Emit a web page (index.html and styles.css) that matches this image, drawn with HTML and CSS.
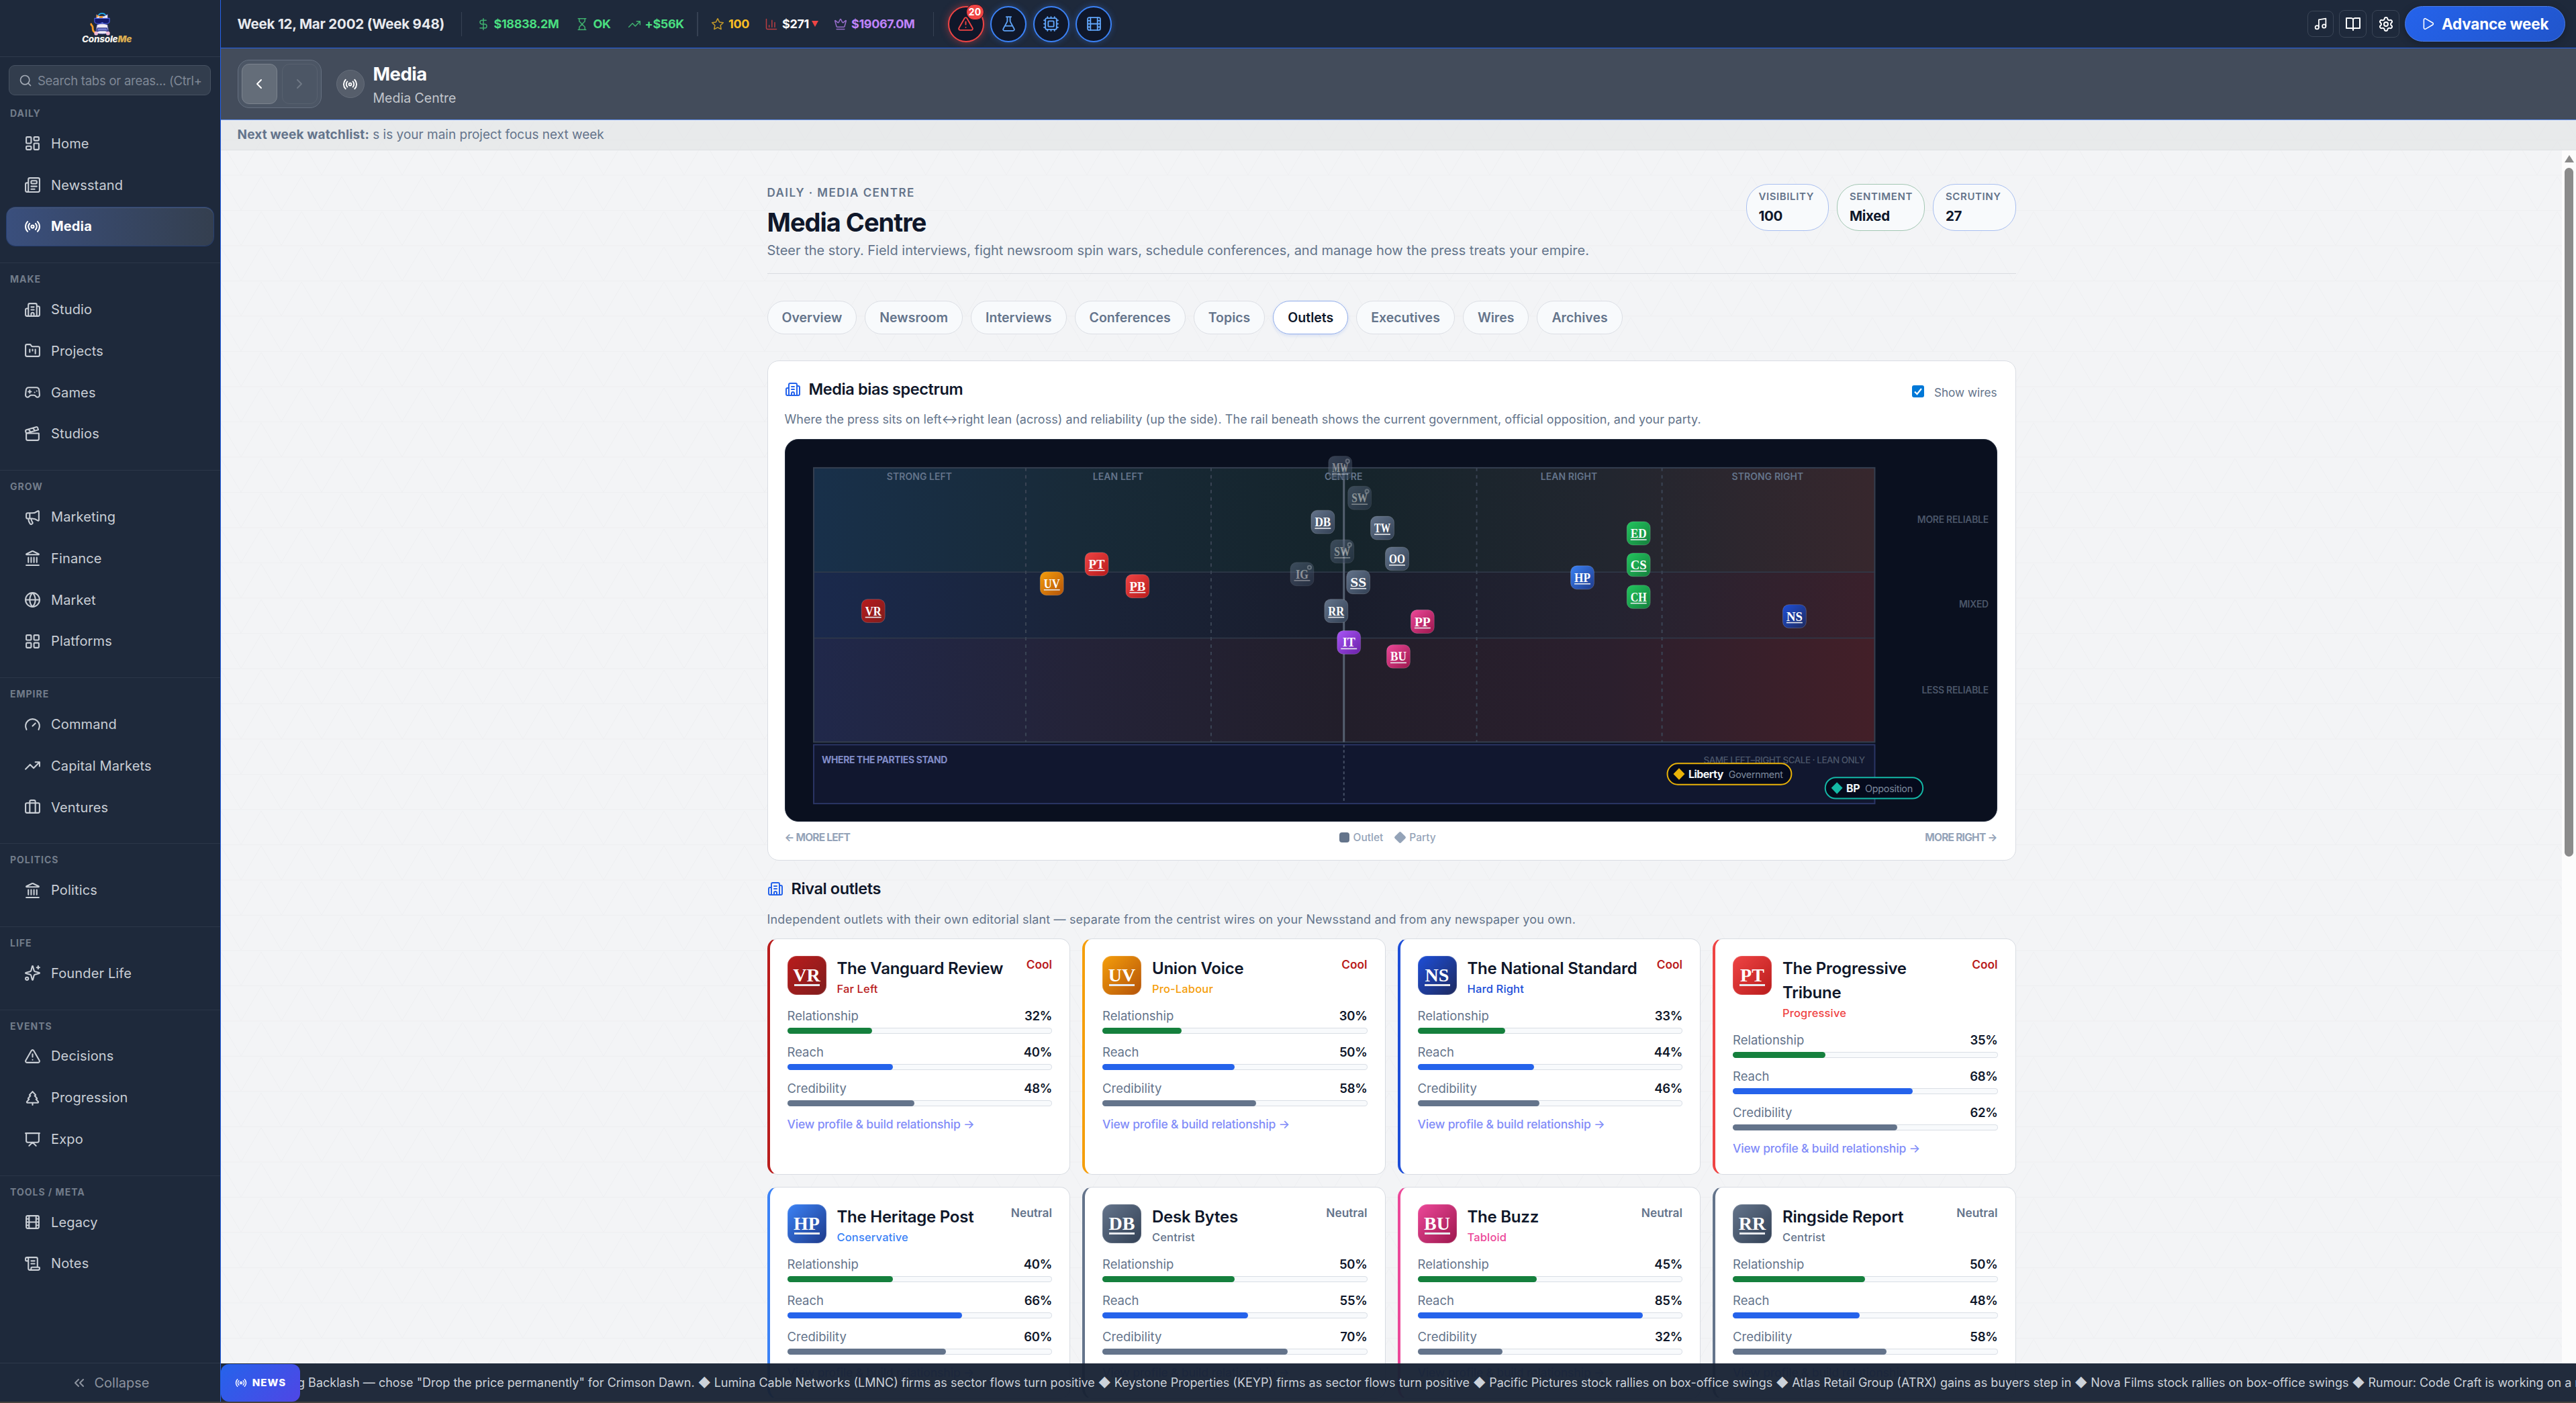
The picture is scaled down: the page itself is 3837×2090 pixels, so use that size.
FILE: index.html
```
<!DOCTYPE html>
<html lang="en">
<head>
    <meta charset="UTF-8">
    <meta name="viewport" content="width=device-width, initial-scale=1.0">
    <title>ConsoleMe - Media Centre</title>
    <link rel="stylesheet" href="styles.css">
</head>
<body>
    <!-- Icon sprite -->
    <svg class="sprite" aria-hidden="true">
        <symbol id="i-home" viewBox="0 0 24 24"><rect x="3" y="3" width="7" height="9" rx="1"/><rect x="14" y="3" width="7" height="5" rx="1"/><rect x="14" y="12" width="7" height="9" rx="1"/><rect x="3" y="16" width="7" height="5" rx="1"/></symbol>
        <symbol id="i-news" viewBox="0 0 24 24"><path d="M15 18h-5M18 14h-8M4 22h16a2 2 0 0 0 2-2V4a2 2 0 0 0-2-2H8a2 2 0 0 0-2 2v16a2 2 0 0 1-4 0v-9a2 2 0 0 1 2-2h2"/><rect x="10" y="6" width="8" height="4" rx="1"/></symbol>
        <symbol id="i-radio" viewBox="0 0 24 24"><path d="M16.247 7.761a6 6 0 0 1 0 8.478M19.075 4.933a10 10 0 0 1 0 14.134M4.925 19.067a10 10 0 0 1 0-14.134M7.753 16.239a6 6 0 0 1 0-8.478"/><circle cx="12" cy="12" r="2"/></symbol>
        <symbol id="i-building" viewBox="0 0 24 24"><path d="M10 12h4M10 8h4M14 21v-3a2 2 0 0 0-4 0v3M6 10H4a2 2 0 0 0-2 2v7a2 2 0 0 0 2 2h16a2 2 0 0 0 2-2V9a2 2 0 0 0-2-2h-2M6 21V5a2 2 0 0 1 2-2h8a2 2 0 0 1 2 2v16"/></symbol>
        <symbol id="i-kanban" viewBox="0 0 24 24"><path d="M4 20h16a2 2 0 0 0 2-2V8a2 2 0 0 0-2-2h-7.93a2 2 0 0 1-1.66-.9l-.82-1.2A2 2 0 0 0 7.93 3H4a2 2 0 0 0-2 2v13c0 1.1.9 2 2 2ZM8 10v4M12 10v2M16 10v6"/></symbol>
        <symbol id="i-gamepad" viewBox="0 0 24 24"><path d="M6 11h4M8 9v4M15 12h.01M18 10h.01M17.32 5H6.68a4 4 0 0 0-3.978 3.59c-.006.052-.01.101-.017.152C2.604 9.416 2 14.456 2 16a3 3 0 0 0 3 3c1 0 1.5-.5 2-1l1.414-1.414A2 2 0 0 1 9.828 16h4.344a2 2 0 0 1 1.414.586L17 18c.5.5 1 1 2 1a3 3 0 0 0 3-3c0-1.545-.604-6.584-.685-7.258-.007-.05-.011-.1-.017-.151A4 4 0 0 0 17.32 5z"/></symbol>
        <symbol id="i-clapper" viewBox="0 0 24 24"><path d="M20.2 6 3 11l-.9-2.4c-.3-1.1.3-2.2 1.3-2.5l13.5-4c1.1-.3 2.2.3 2.5 1.3ZM6.2 5.3l3.1 3.9M12.4 3.4l3.1 4M3 11h18v8a2 2 0 0 1-2 2H5a2 2 0 0 1-2-2Z"/></symbol>
        <symbol id="i-megaphone" viewBox="0 0 24 24"><path d="M11 6a13 13 0 0 0 8.4-2.8A1 1 0 0 1 21 4v12a1 1 0 0 1-1.6.8A13 13 0 0 0 11 14H5a2 2 0 0 1-2-2V8a2 2 0 0 1 2-2zM6 14a12 12 0 0 0 2.4 7.2 2 2 0 0 0 3.2-2.4A8 8 0 0 1 10 14M8 6v8"/></symbol>
        <symbol id="i-bank" viewBox="0 0 24 24"><path d="M10 18v-7M11.12 2.198a2 2 0 0 1 1.76.006l7.866 3.847c.476.233.31.949-.22.949H3.474c-.53 0-.695-.716-.22-.949zM14 18v-7M18 18v-7M3 22h18M6 18v-7"/></symbol>
        <symbol id="i-globe" viewBox="0 0 24 24"><circle cx="12" cy="12" r="10"/><path d="M12 2a14.5 14.5 0 0 0 0 20 14.5 14.5 0 0 0 0-20M2 12h20"/></symbol>
        <symbol id="i-grid" viewBox="0 0 24 24"><rect x="3" y="3" width="7" height="7" rx="1"/><rect x="14" y="3" width="7" height="7" rx="1"/><rect x="14" y="14" width="7" height="7" rx="1"/><rect x="3" y="14" width="7" height="7" rx="1"/></symbol>
        <symbol id="i-gauge" viewBox="0 0 24 24"><path d="m12 14 4-4M3.34 19a10 10 0 1 1 17.32 0"/></symbol>
        <symbol id="i-trend" viewBox="0 0 24 24"><path d="M16 7h6v6M22 7l-8.5 8.5-5-5L2 17"/></symbol>
        <symbol id="i-case" viewBox="0 0 24 24"><path d="M16 20V4a2 2 0 0 0-2-2h-4a2 2 0 0 0-2 2v16"/><rect x="2" y="6" width="20" height="14" rx="2"/></symbol>
        <symbol id="i-sparkles" viewBox="0 0 24 24"><path d="M9.937 15.5A2 2 0 0 0 8.5 14.063l-6.135-1.582a.5.5 0 0 1 0-.962L8.5 9.936A2 2 0 0 0 9.937 8.5l1.582-6.135a.5.5 0 0 1 .963 0L14.063 8.5A2 2 0 0 0 15.5 9.937l6.135 1.581a.5.5 0 0 1 0 .964L15.5 14.063a2 2 0 0 0-1.437 1.437l-1.582 6.135a.5.5 0 0 1-.963 0zM20 2v4M22 4h-4"/><circle cx="4" cy="20" r="2"/></symbol>
        <symbol id="i-alert" viewBox="0 0 24 24"><path d="m21.73 18-8-14a2 2 0 0 0-3.48 0l-8 14A2 2 0 0 0 4 21h16a2 2 0 0 0 1.73-3M12 9v4M12 17h.01"/></symbol>
        <symbol id="i-tree" viewBox="0 0 24 24"><path d="m17 14 3 3.3a1 1 0 0 1-.7 1.7H4.7a1 1 0 0 1-.7-1.7L7 14h-.3a1 1 0 0 1-.7-1.7L9 9h-.2A1 1 0 0 1 8 7.3L12 3l4 4.3a1 1 0 0 1-.8 1.7H15l3 3.3a1 1 0 0 1-.7 1.7H17ZM12 22v-3"/></symbol>
        <symbol id="i-expo" viewBox="0 0 24 24"><path d="M2 3h20M21 3v11a2 2 0 0 1-2 2H5a2 2 0 0 1-2-2V3M7 21l5-5 5 5"/></symbol>
        <symbol id="i-film" viewBox="0 0 24 24"><rect x="3" y="3" width="18" height="18" rx="2"/><path d="M7 3v18M3 7.5h4M3 12h18M3 16.5h4M17 3v18M17 7.5h4M17 16.5h4"/></symbol>
        <symbol id="i-scroll" viewBox="0 0 24 24"><path d="M15 12h-5M15 8h-5M19 17V5a2 2 0 0 0-2-2H4M8 21h12a2 2 0 0 0 2-2v-1a1 1 0 0 0-1-1H11a1 1 0 0 0-1 1v1a2 2 0 1 1-4 0V5a2 2 0 1 0-4 0v2a1 1 0 0 0 1 1h3"/></symbol>
        <symbol id="i-collapse" viewBox="0 0 24 24"><path d="m11 17-5-5 5-5M18 17l-5-5 5-5"/></symbol>
        <symbol id="i-search" viewBox="0 0 24 24"><circle cx="11" cy="11" r="8"/><path d="m21 21-4.3-4.3"/></symbol>
        <symbol id="i-dollar" viewBox="0 0 24 24"><path d="M12 2v20M17 5H9.5a3.5 3.5 0 0 0 0 7h5a3.5 3.5 0 0 1 0 7H6"/></symbol>
        <symbol id="i-hourglass" viewBox="0 0 24 24"><path d="M5 22h14M5 2h14M17 22v-4.172a2 2 0 0 0-.586-1.414L12 12l-4.414 4.414A2 2 0 0 0 7 17.828V22M7 2v4.172a2 2 0 0 0 .586 1.414L12 12l4.414-4.414A2 2 0 0 0 17 6.172V2"/></symbol>
        <symbol id="i-star" viewBox="0 0 24 24"><path d="M12 2l3.1 6.3 6.9 1-5 4.9 1.2 6.8-6.2-3.2L5.8 21 7 14.2 2 9.300l6.9-1z"/></symbol>
        <symbol id="i-chart" viewBox="0 0 24 24"><path d="M3 3v16a2 2 0 0 0 2 2h16M18 17V9M13 17V5M8 17v-3"/></symbol>
        <symbol id="i-crown" viewBox="0 0 24 24"><path d="M11.562 3.266a.5.5 0 0 1 .876 0L15.39 8.87a1 1 0 0 0 1.516.294L21.183 5.5a.5.5 0 0 1 .798.519l-2.834 10.246a1 1 0 0 1-.956.734H5.81a1 1 0 0 1-.957-.734L2.02 6.02a.5.5 0 0 1 .798-.519l4.276 3.664a1 1 0 0 0 1.516-.294zM5 21h14"/></symbol>
        <symbol id="i-flask" viewBox="0 0 24 24"><path d="M14 2v6a2 2 0 0 0 .245.96l5.51 10.08A2 2 0 0 1 18 22H6a2 2 0 0 1-1.755-2.96l5.51-10.08A2 2 0 0 0 10 8V2M6.453 15h11.094M8.5 2h7"/></symbol>
        <symbol id="i-cpu" viewBox="0 0 24 24"><rect x="4" y="4" width="16" height="16" rx="2"/><rect x="8" y="8" width="8" height="8" rx="1"/><path d="M12 2v2M12 20v2M17 2v2M17 20v2M7 2v2M7 20v2M2 12h2M20 12h2M2 17h2M20 17h2M2 7h2M20 7h2"/></symbol>
        <symbol id="i-music" viewBox="0 0 24 24"><path d="M9 18V5l12-2v13"/><circle cx="6" cy="18" r="3"/><circle cx="18" cy="16" r="3"/></symbol>
        <symbol id="i-book" viewBox="0 0 24 24"><path d="M12 5v16M2 3h7a3 3 0 0 1 3 2 3 3 0 0 1 3-2h7v15h-7a3 3 0 0 0-3 1 3 3 0 0 0-3-1H2z"/></symbol>
        <symbol id="i-gear" viewBox="0 0 24 24"><path d="M9.671 4.136a2.34 2.34 0 0 1 4.659 0 2.34 2.34 0 0 0 3.319 1.915 2.34 2.34 0 0 1 2.33 4.033 2.34 2.34 0 0 0 0 3.831 2.34 2.34 0 0 1-2.33 4.033 2.34 2.34 0 0 0-3.319 1.915 2.34 2.34 0 0 1-4.659 0 2.34 2.34 0 0 0-3.32-1.915 2.34 2.34 0 0 1-2.33-4.033 2.34 2.34 0 0 0 0-3.831A2.34 2.34 0 0 1 6.35 6.051a2.34 2.34 0 0 0 3.319-1.915"/><circle cx="12" cy="12" r="3"/></symbol>
        <symbol id="i-play" viewBox="0 0 24 24"><path d="M5 5a2 2 0 0 1 3.008-1.728l11.997 6.998a2 2 0 0 1 .003 3.458l-12 7A2 2 0 0 1 5 19z"/></symbol>
        <symbol id="i-left" viewBox="0 0 24 24"><path d="m15 18-6-6 6-6"/></symbol>
        <symbol id="i-right" viewBox="0 0 24 24"><path d="m9 18 6-6-6-6"/></symbol>
    </svg>

    <div class="app">
        <aside class="sidebar">
            <div class="brand">
                <svg class="mascot" viewBox="0 0 56 62">
                    <path class="m-tail" d="M14 53C5 50 8 42 7 38 6 34 3 34 3 31"/>
                    <path class="m-fur" d="M16 16 17 6l8 4h12l9-5 1 13c1 9-5 13-15 13S15 26 16 16z"/>
                    <path class="m-patch" d="M25 10h9l-2 9h-9zM17 6l7 4-7 4z"/>
                    <path class="m-phones" d="M22 8c4-7 15-7 19 0"/>
                    <path class="m-fur" d="M18 33c5-4 22-4 28 0l3 20c-4 5-30 5-34 0z"/>
                    <path class="m-goggles" d="M12 16h39v8c0 5-8 6-13 6l-6-3-6 3c-6 0-14-1-14-6z"/>
                    <path class="m-pad" d="M20 41h24l3 9-7-2H25l-8 2z"/>
                    <circle class="m-foot" cx="16" cy="55" r="5"/><circle class="m-foot" cx="47" cy="55" r="5"/>
                </svg>
                <span class="wordmark">Console<b>Me</b></span>
            </div>
            <div class="search">
                <svg class="icon"><use href="#i-search"/></svg>
                <span>Search tabs or areas... (Ctrl+K)</span>
            </div>
            <nav class="menu">
                <section>
                    <h6>DAILY</h6>
                    <a><svg class="icon"><use href="#i-home"/></svg><span>Home</span></a>
                    <a><svg class="icon"><use href="#i-news"/></svg><span>Newsstand</span></a>
                    <a class="active"><svg class="icon"><use href="#i-radio"/></svg><span>Media</span></a>
                </section>
                <section>
                    <h6>MAKE</h6>
                    <a><svg class="icon"><use href="#i-building"/></svg><span>Studio</span></a>
                    <a><svg class="icon"><use href="#i-kanban"/></svg><span>Projects</span></a>
                    <a><svg class="icon"><use href="#i-gamepad"/></svg><span>Games</span></a>
                    <a><svg class="icon"><use href="#i-clapper"/></svg><span>Studios</span></a>
                </section>
                <section>
                    <h6>GROW</h6>
                    <a><svg class="icon"><use href="#i-megaphone"/></svg><span>Marketing</span></a>
                    <a><svg class="icon"><use href="#i-bank"/></svg><span>Finance</span></a>
                    <a><svg class="icon"><use href="#i-globe"/></svg><span>Market</span></a>
                    <a><svg class="icon"><use href="#i-grid"/></svg><span>Platforms</span></a>
                </section>
                <section>
                    <h6>EMPIRE</h6>
                    <a><svg class="icon"><use href="#i-gauge"/></svg><span>Command</span></a>
                    <a><svg class="icon"><use href="#i-trend"/></svg><span>Capital Markets</span></a>
                    <a><svg class="icon"><use href="#i-case"/></svg><span>Ventures</span></a>
                </section>
                <section>
                    <h6>POLITICS</h6>
                    <a><svg class="icon"><use href="#i-bank"/></svg><span>Politics</span></a>
                </section>
                <section>
                    <h6>LIFE</h6>
                    <a><svg class="icon"><use href="#i-sparkles"/></svg><span>Founder Life</span></a>
                </section>
                <section>
                    <h6>EVENTS</h6>
                    <a><svg class="icon"><use href="#i-alert"/></svg><span>Decisions</span></a>
                    <a><svg class="icon"><use href="#i-tree"/></svg><span>Progression</span></a>
                    <a><svg class="icon"><use href="#i-expo"/></svg><span>Expo</span></a>
                </section>
                <section>
                    <h6>TOOLS / META</h6>
                    <a><svg class="icon"><use href="#i-film"/></svg><span>Legacy</span></a>
                    <a><svg class="icon"><use href="#i-scroll"/></svg><span>Notes</span></a>
                </section>
            </nav>
            <div class="collapse"><svg class="icon"><use href="#i-collapse"/></svg><span>Collapse</span></div>
        </aside>

        <div class="main">
            <header class="topbar">
                <span class="date">Week 12, Mar 2002 (Week 948)</span>
                <div class="stats">
                    <span class="stat green"><svg class="icon"><use href="#i-dollar"/></svg><b>$18838.2M</b></span>
                    <span class="stat green"><svg class="icon"><use href="#i-hourglass"/></svg><b>OK</b></span>
                    <span class="stat green"><svg class="icon"><use href="#i-trend"/></svg><b>+$56K</b></span>
                </div>
                <div class="stats tight">
                    <span class="stat gold"><svg class="icon"><use href="#i-star"/></svg><b>100</b></span>
                    <span class="stat share"><svg class="icon"><use href="#i-chart"/></svg><b>$271</b><i class="down"></i></span>
                    <span class="stat purple"><svg class="icon"><use href="#i-crown"/></svg><b>$19067.0M</b></span>
                </div>
                <div class="rounds">
                    <span class="round alert"><svg class="icon"><use href="#i-alert"/></svg><em>20</em></span>
                    <span class="round"><svg class="icon"><use href="#i-flask"/></svg></span>
                    <span class="round"><svg class="icon"><use href="#i-cpu"/></svg></span>
                    <span class="round"><svg class="icon"><use href="#i-film"/></svg></span>
                </div>
                <div class="tools">
                    <span class="tool music"><svg class="icon"><use href="#i-music"/></svg></span>
                    <span class="tool"><svg class="icon"><use href="#i-book"/></svg></span>
                    <span class="tool"><svg class="icon"><use href="#i-gear"/></svg></span>
                </div>
                <button class="advance"><svg class="icon"><use href="#i-play"/></svg><span>Advance week</span></button>
            </header>

            <div class="crumb">
                <div class="history">
                    <span class="hist"><svg class="icon"><use href="#i-left"/></svg></span>
                    <span class="hist off"><svg class="icon"><use href="#i-right"/></svg></span>
                </div>
                <span class="crumb-icon"><svg class="icon"><use href="#i-radio"/></svg></span>
                <div class="crumb-text">
                    <strong>Media</strong>
                    <span>Media Centre</span>
                </div>
            </div>

            <div class="watchlist"><b>Next week watchlist:</b> <span>s is your main project focus next week</span></div>

            <div class="scroller">
                <div class="page">
                    <div class="page-head">
                        <div>
                            <div class="eyebrow">DAILY · MEDIA CENTRE</div>
                            <h1>Media Centre</h1>
                            <p class="lead">Steer the story. Field interviews, fight newsroom spin wars, schedule conferences, and manage how the press treats your empire.</p>
                        </div>
                        <div class="pills">
                            <div class="pill"><small>VISIBILITY</small><b>100</b></div>
                            <div class="pill ok"><small>SENTIMENT</small><b>Mixed</b></div>
                            <div class="pill"><small>SCRUTINY</small><b>27</b></div>
                        </div>
                    </div>

                    <div class="tabs">
                        <span class="tab">Overview</span>
                        <span class="tab">Newsroom</span>
                        <span class="tab">Interviews</span>
                        <span class="tab">Conferences</span>
                        <span class="tab">Topics</span>
                        <span class="tab on">Outlets</span>
                        <span class="tab">Executives</span>
                        <span class="tab">Wires</span>
                        <span class="tab">Archives</span>
                    </div>

                    <div class="card">
                        <div class="card-head">
                            <h2><svg class="icon"><use href="#i-building"/></svg><span>Media bias spectrum</span></h2>
                            <label class="wires"><span class="check"><svg viewBox="0 0 18 18"><path d="M4 9.500 7.500 13 14 5"/></svg></span><span>Show wires</span></label>
                        </div>
                        <p class="note">Where the press sits on left↔right lean (across) and reliability (up the side). The rail beneath shows the current government, official opposition, and your party.</p>
                        <svg class="map" id="map" viewBox="0 0 1806 570">
                            <defs>
                                <linearGradient id="row1"><stop offset="0" stop-color="#18304a"/><stop offset=".25" stop-color="#182a38"/><stop offset=".5" stop-color="#15242b"/><stop offset=".75" stop-color="#22262f"/><stop offset="1" stop-color="#37272d"/></linearGradient>
                                <linearGradient id="row2"><stop offset="0" stop-color="#1a294c"/><stop offset=".25" stop-color="#1a2439"/><stop offset=".5" stop-color="#191d2c"/><stop offset=".75" stop-color="#242331"/><stop offset="1" stop-color="#3a202b"/></linearGradient>
                                <linearGradient id="row3"><stop offset="0" stop-color="#20284a"/><stop offset=".25" stop-color="#242338"/><stop offset=".5" stop-color="#221e2a"/><stop offset=".75" stop-color="#2b1f2d"/><stop offset="1" stop-color="#431f28"/></linearGradient>
                            </defs>
                            <rect x="40" y="42" width="1586" height="156" fill="url(#row1)"/>
                            <rect x="40" y="198" width="1586" height="98" fill="url(#row2)"/>
                            <rect x="40" y="296" width="1586" height="156" fill="url(#row3)"/>
                            <path class="grid-h" d="M40 198H1626M40 296.500H1626"/>
                            <rect class="plot" x="40" y="42" width="1586" height="410"/>
                            <path class="grid-v" d="M357 42V452M634 42V452M1031 42V452M1308 42V452"/>
                            <path class="centre" d="M832.500 42V452"/>
                            <rect class="rail" x="40" y="456" width="1586" height="88"/>
                            <path class="centre-dash" d="M832.500 456V544"/>
                            <g class="band">
                                <text x="198" y="60">STRONG LEFT</text>
                                <text x="495" y="60">LEAN LEFT</text>
                                <text x="832" y="60">CENTRE</text>
                                <text x="1169" y="60">LEAN RIGHT</text>
                                <text x="1466" y="60">STRONG RIGHT</text>
                            </g>
                            <g class="rel">
                                <text x="1796" y="124">MORE RELIABLE</text>
                                <text x="1796" y="251">MIXED</text>
                                <text x="1796" y="379">LESS RELIABLE</text>
                                <text class="scale" x="1611" y="484">SAME LEFT–RIGHT SCALE · LEAN ONLY</text>
                            </g>
                            <text class="rail-title" x="52" y="484">WHERE THE PARTIES STAND</text>
                        </svg>
                        <div class="axis">
                            <b>← MORE LEFT</b>
                            <div class="legend"><i class="sq"></i><span>Outlet</span><i class="dia"></i><span>Party</span></div>
                            <b>MORE RIGHT →</b>
                        </div>
                    </div>

                    <h2 class="rival-title"><svg class="icon"><use href="#i-building"/></svg><span>Rival outlets</span></h2>
                    <p class="note rival-note">Independent outlets with their own editorial slant — separate from the centrist wires on your Newsstand and from any newspaper you own.</p>
                    <div class="outlets" id="outlets"></div>
                </div>
                <div class="scrollbar"><i class="up"></i><i class="thumb"></i></div>
            </div>

            <footer class="ticker">
                <span class="badge"><svg class="icon"><use href="#i-radio"/></svg><span>NEWS</span></span>
                <div class="feed"><span class="line">g Backlash — chose "Drop the price permanently" for Crimson Dawn. ◆ Lumina Cable Networks (LMNC) firms as sector flows turn positive ◆ Keystone Properties (KEYP) firms as sector flows turn positive ◆ Pacific Pictures stock rallies on box-office swings ◆ Atlas Retail Group (ATRX) gains as buyers step in ◆ Nova Films stock rallies on box-office swings ◆ Rumour: Code Craft is working on a new title</span></div>
            </footer>
        </div>
    </div>
    <div class="edge"></div>
    <script src="outlets.js"></script>
</body>
</html>
```
FILE: styles.css
```
* {
    box-sizing: border-box;
}
body {
    margin: 0;
    width: 3837px;
    height: 2090px;
    overflow: hidden;
    font-family: Inter, "Liberation Sans", sans-serif;
    background: #1e293b;
    color: #0f172a;
    font-size: 20px;
}
h1, h2, h6, p {
    margin: 0;
}
.sprite {
    display: none;
}
.icon {
    width: 24px;
    height: 24px;
    flex: none;
    fill: none;
    stroke: currentColor;
    stroke-width: 2;
    stroke-linecap: round;
    stroke-linejoin: round;
}
.app {
    display: flex;
    height: 2088px;
}
.edge {
    height: 2px;
    background: #46433f;
}

/* sidebar */
.sidebar {
    width: 329px;
    flex: none;
    display: flex;
    flex-direction: column;
    border-right: 1px solid #2563eb;
    background: #1e293b;
}
.brand {
    height: 85px;
    flex: none;
    display: flex;
    flex-direction: column;
    align-items: center;
    padding-top: 18px;
    padding-right: 10px;
    border-bottom: 1px solid #2f3a4b;
}
.mascot {
    width: 32px;
    height: 36px;
    margin-right: 18px;
}
.m-tail {
    fill: none;
    stroke: #f59a23;
    stroke-width: 5;
    stroke-linecap: round;
}
.m-fur {
    fill: #efeaf5;
    stroke: #3b3f8f;
    stroke-width: 1.5;
}
.m-patch {
    fill: #f39a2b;
}
.m-phones {
    fill: none;
    stroke: #22a7e8;
    stroke-width: 3;
}
.m-goggles {
    fill: #141a6b;
    stroke: #4a5fe0;
    stroke-width: 2;
}
.m-pad {
    fill: #6f79cf;
    stroke: #232a7d;
    stroke-width: 2;
}
.m-foot {
    fill: #f0b9d6;
}
.wordmark {
    margin-top: -4px;
    font-size: 13.5px;
    line-height: 16px;
    font-weight: 800;
    font-style: italic;
    letter-spacing: -.2px;
    color: #f5f3ee;
}
.wordmark b {
    color: #d9ab50;
}
.search {
    flex: none;
    display: flex;
    align-items: center;
    gap: 8px;
    width: 301px;
    height: 45px;
    margin: 12px 0 0 13px;
    padding: 0 12px 0 14px;
    border: 1px solid #475262;
    border-radius: 9px;
    background: #323d4d;
    color: #7f8896;
    font-size: 18.5px;
    letter-spacing: -.25px;
    white-space: nowrap;
}
.search span {
    flex: 1;
    overflow: hidden;
}
.search .icon {
    width: 20px;
    height: 20px;
    color: #a3aab5;
}
.menu {
    flex: 1;
    padding-top: 3px;
}
.menu section {
    padding-bottom: 20.8px;
    border-bottom: 1px solid #2b3648;
}
.menu section:last-child {
    border-bottom: 0;
}
.menu h6 {
    height: 40px;
    padding: 15px 0 0 15px;
    font-size: 14px;
    line-height: 18px;
    font-weight: 700;
    letter-spacing: 1px;
    color: #727c8a;
}
.menu a {
    display: flex;
    align-items: center;
    gap: 15px;
    height: 57.8px;
    margin: 0 10px 4px;
    padding-left: 26px;
    border-radius: 13px;
    color: #c9ced5;
    letter-spacing: .15px;
}
.menu .icon {
    width: 25px;
    height: 25px;
}
.menu a.active {
    color: #fff;
    font-weight: 700;
    background: linear-gradient(90deg, #3a4f7d, #343f4f);
    box-shadow: 0 0 0 1px #263f73, inset 0 1px 0 #4c5a74;
}
.collapse {
    height: 58px;
    flex: none;
    display: flex;
    align-items: center;
    justify-content: center;
    gap: 11px;
    border-top: 1px solid #2f3a4b;
    color: #8c939e;
}

/* top bar */
.main {
    flex: 1;
    min-width: 0;
    display: flex;
    flex-direction: column;
    position: relative;
    background: #f3f4f6 url("data:image/svg+xml,%3Csvg xmlns='http://www.w3.org/2000/svg' width='60' height='105'%3E%3Cpath d='M0 0L30 50.5L60 0M0 53L30 103L60 53M0 51H60M0 103.5H60' fill='none' stroke='%23eeeff1' stroke-width='1'/%3E%3C/svg%3E");
}
.topbar {
    height: 72px;
    flex: none;
    display: flex;
    align-items: center;
    padding: 0 16px 0 24.5px;
    background: #1e293b;
    border-bottom: 1px solid #2563eb;
}
.date {
    width: 333px;
    font-size: 20.5px;
    font-weight: 700;
    letter-spacing: -.2px;
    white-space: nowrap;
    color: #e8eaee;
}
.stats {
    display: flex;
    gap: 25px;
    width: 351.5px;
    height: 36px;
    align-items: center;
    padding-left: 22px;
    border-left: 1px solid #364153;
    font-size: 18px;
    letter-spacing: -.35px;
}
.stats.tight {
    gap: 23px;
    padding-left: 19px;
    border-left-width: 2px;
}
.stat {
    display: flex;
    align-items: center;
    gap: 6px;
}
.stat .icon {
    width: 20px;
    height: 20px;
    stroke-width: 1.8;
    opacity: .75;
}
.green {
    color: #4ade80;
}
.gold {
    color: #fbbf24;
}
.share {
    color: #fff;
}
.share .icon {
    color: #ef4444;
}
.purple {
    color: #c084fc;
}
.down {
    margin-left: -2px;
    border: 5.5px solid transparent;
    border-top: 9px solid #ef4444;
    border-bottom: 0;
}
.rounds {
    display: flex;
    gap: 9.5px;
    flex: 1;
    padding-left: 21px;
    border-left: 1px solid #364153;
    height: 36px;
    align-items: center;
}
.round {
    position: relative;
    width: 54px;
    height: 54px;
    display: flex;
    align-items: center;
    justify-content: center;
    border: 2.5px solid #3b82f6;
    border-radius: 50%;
    background: #0f172a;
    color: #60a5fa;
    box-shadow: 0 0 10px rgba(59, 130, 246, .35);
}
.round .icon {
    width: 25px;
    height: 25px;
    stroke-width: 1.8;
}
.round.alert {
    border-color: #ef4444;
    color: #ef4444;
    box-shadow: 0 0 12px rgba(239, 68, 68, .5);
}
.round em {
    position: absolute;
    top: -5px;
    right: -2px;
    width: 27px;
    height: 24px;
    border-radius: 12px;
    border: 1px solid #0f172a;
    background: #ef4444;
    color: #fff;
    font: 700 14px/22px Inter, sans-serif;
    text-align: center;
}
.tools {
    display: flex;
    align-items: center;
    gap: 8px;
    margin-right: 8px;
}
.tool {
    width: 41px;
    height: 41px;
    display: flex;
    align-items: center;
    justify-content: center;
    border: 1px solid #3a4556;
    border-radius: 8px;
    color: #fff;
}
.tool.music {
    width: 39px;
    height: 39px;
}
.tool .icon {
    width: 24px;
    height: 24px;
}
.tool.music .icon {
    width: 21px;
    height: 21px;
}
.advance {
    display: flex;
    align-items: center;
    gap: 10px;
    width: 239px;
    height: 53px;
    padding: 0 0 0 23px;
    border: 1px solid #4a7ce8;
    border-radius: 27px;
    background: linear-gradient(135deg, #2563eb, #2155cb);
    color: #fff;
    font: 700 22.5px Inter, sans-serif;
    letter-spacing: -.2px;
    box-shadow: 0 3px 12px rgba(0, 0, 0, .25);
}
.advance .icon {
    width: 21px;
    height: 21px;
    stroke-width: 1.8;
}

/* breadcrumb band */
.crumb {
    height: 107px;
    flex: none;
    display: flex;
    align-items: center;
    padding: 0 24.5px;
    background: #434c5b;
    border-bottom: 1px solid #6492f2;
}
.history {
    display: flex;
    gap: 7px;
    width: 125px;
    height: 72px;
    padding: 5px;
    border: 1px solid #657080;
    border-radius: 17px;
    background: #4c5665;
}
.hist {
    flex: 1;
    display: flex;
    align-items: center;
    justify-content: center;
    border: 1px solid #7b838e;
    border-radius: 11px;
    background: #646d79;
    color: #fff;
}
.hist.off {
    background: transparent;
    border-color: #58616f;
    color: #6f7885;
}
.crumb-icon {
    width: 42px;
    height: 42px;
    margin: 0 13px 0 22px;
    display: flex;
    align-items: center;
    justify-content: center;
    border: 1px solid #656d7a;
    border-radius: 50%;
    background: #565e6b;
    color: #fff;
}
.crumb-icon .icon {
    width: 23px;
    height: 23px;
}
.crumb-text {
    display: flex;
    flex-direction: column;
    padding-top: 5px;
}
.crumb-text strong {
    font-size: 27.5px;
    line-height: 38px;
    letter-spacing: -.5px;
    color: #fff;
}
.crumb-text span {
    font-size: 19.5px;
    line-height: 35px;
    color: #c2c6cc;
}
.watchlist {
    height: 45px;
    flex: none;
    padding: 0 24.5px;
    line-height: 44px;
    border-bottom: 1px solid #dfe1e4;
    background: rgba(225, 226, 228, .6);
    color: #64748b;
    font-size: 19px;
}
.watchlist b {
    letter-spacing: .15px;
}

/* page */
.scroller {
    flex: 1;
    min-height: 0;
    display: flex;
    overflow: hidden;
}
.page {
    width: 1860px;
    height: 1900px;
    margin: 0 auto;
    padding-top: 51px;
}
.scrollbar {
    width: 21px;
    flex: none;
    display: flex;
    flex-direction: column;
    align-items: center;
    background: #fcfcfc;
}
.up {
    margin: 7px 0 8px;
    border: 7px solid transparent;
    border-top: 0;
    border-bottom: 11px solid #8b8b8b;
}
.thumb {
    width: 13px;
    height: 1026px;
    border-radius: 7px;
    background: #8b8b8b;
}
.page-head {
    display: flex;
    justify-content: space-between;
    height: 133px;
    border-bottom: 1px solid #d9dce1;
}
.eyebrow {
    font-size: 17px;
    line-height: 24px;
    font-weight: 600;
    letter-spacing: 1.45px;
    color: #64748b;
}
h1 {
    margin-top: 8px;
    font-size: 38px;
    line-height: 48px;
    font-weight: 700;
    letter-spacing: -1px;
}
.lead {
    margin-top: 1px;
    font-size: 20px;
    line-height: 34px;
    color: #64748b;
    white-space: nowrap;
}
.pills {
    display: flex;
    gap: 12px;
    margin-top: -1px;
}
.pill {
    width: 123.5px;
    height: 70px;
    display: flex;
    flex-direction: column;
    padding: 8px 0 0 18px;
    border: 1px solid #a9bff0;
    border-radius: 33px;
    background: #f8fafc;
}
.pill.ok {
    width: 131px;
    border-color: #a3c7b3;
}
.pill small {
    font-size: 15px;
    line-height: 20px;
    font-weight: 600;
    letter-spacing: .6px;
    color: #64748b;
}
.pill b {
    font-size: 20.5px;
    line-height: 38px;
    letter-spacing: -.3px;
}
.tabs {
    display: flex;
    gap: 12px;
    margin-top: 40px;
}
.tab {
    height: 50px;
    padding: 0 21px;
    line-height: 48px;
    border: 1px solid #dcdfe5;
    border-radius: 25px;
    background: #f8fafc;
    color: #64748b;
    font-size: 19.5px;
    font-weight: 600;
}
.tab.on {
    background: #fff;
    border-color: #92aeeb;
    color: #0f172a;
    box-shadow: 0 2px 5px rgba(37, 99, 235, .15);
}
.card {
    height: 745px;
    margin-top: 39px;
    padding: 25px 27px 0 25px;
    border: 1px solid #dadde3;
    border-radius: 17px;
    background: #fff;
}
.card-head {
    display: flex;
    justify-content: space-between;
    height: 34px;
}
h2 {
    display: flex;
    align-items: center;
    gap: 12px;
    font-size: 23.5px;
    line-height: 32px;
    font-weight: 600;
    letter-spacing: -.4px;
}
h2 .icon {
    color: #2563eb;
}
.wires {
    display: flex;
    align-items: center;
    gap: 15px;
    padding-top: 9px;
    font-size: 17.2px;
    color: #64748b;
}
.check {
    width: 18px;
    height: 18px;
    margin-top: -3px;
    border-radius: 3px;
    background: #0078d7;
}
.check svg {
    display: block;
    fill: none;
    stroke: #fff;
    stroke-width: 2.2;
}
.note {
    margin-top: 12px;
    height: 45px;
    line-height: 32px;
    font-size: 18px;
    letter-spacing: .055px;
    color: #64748b;
    white-space: nowrap;
}

/* bias map */
.map {
    display: block;
    width: 1806px;
    height: 570px;
    border: 1px solid #232c3d;
    border-radius: 20px;
    background: #0a101f;
}
.plot {
    fill: none;
    stroke: #353f50;
    stroke-width: 2;
}
.grid-h {
    stroke: #303a4a;
    stroke-width: 1.5;
}
.grid-v {
    stroke: #3b4555;
    stroke-width: 2;
    stroke-dasharray: 5 6;
}
.centre {
    stroke: #556070;
    stroke-width: 3;
}
.rail {
    fill: #11172f;
    stroke: #2b3564;
    stroke-width: 2;
}
.centre-dash {
    stroke: #465066;
    stroke-width: 2;
    stroke-dasharray: 4 4;
}
.band text {
    fill: #64748b;
    font-size: 14px;
    font-weight: 600;
    letter-spacing: .1px;
    text-anchor: middle;
}
.rel text {
    fill: #4b5669;
    font-size: 14px;
    font-weight: 600;
    letter-spacing: -.27px;
    text-anchor: end;
}
.rel .scale {
    font-size: 13.5px;
    font-weight: 500;
    letter-spacing: -.5px;
}
.rail-title {
    fill: #818cc8;
    font-size: 14px;
    font-weight: 700;
    letter-spacing: -.37px;
}
.node rect {
    stroke: rgba(255, 255, 255, .18);
}
.node text {
    fill: #fff;
    font: 700 18px "Liberation Serif", serif;
    text-anchor: middle;
}
.node.wire {
    opacity: .5;
}
.ring {
    fill: none;
    stroke: #b8c0cc;
    stroke-width: 2;
}
.party text {
    fill: #f1f5f9;
    font-size: 16px;
    font-weight: 700;
    letter-spacing: -.5px;
}
.party .role {
    fill: #7c899d;
    font-size: 14.5px;
    font-weight: 400;
    letter-spacing: -.3px;
}
.axis {
    display: flex;
    justify-content: space-between;
    align-items: center;
    height: 46px;
    color: #94a3b8;
    font-size: 15.5px;
}
.axis > b {
    letter-spacing: -.75px;
}
.legend {
    display: flex;
    align-items: center;
    font-weight: 500;
}
.sq {
    width: 15px;
    height: 15px;
    margin-right: 6px;
    border-radius: 4px;
    background: #64748b;
}
.dia {
    width: 13px;
    height: 13px;
    margin: 0 7px 0 19px;
    transform: rotate(45deg);
    border-radius: 2px;
    background: #94a3b8;
}

/* rival outlets */
.rival-title {
    margin-top: 26px;
}
.rival-note {
    margin-top: 14px;
    letter-spacing: .17px;
}
.outlets {
    display: grid;
    grid-template-columns: repeat(4, 1fr);
    gap: 18px;
    margin-top: -1px;
}
.outlet {
    padding: 25px 26px 24px;
    border: 1px solid #d8dce2;
    border-left: 4px solid var(--tone);
    border-radius: 15px;
    background: #fff;
}
.outlet-head {
    display: flex;
    gap: 15px;
    align-items: flex-start;
    margin-bottom: 11px;
}
.avatar {
    width: 58px;
    height: 58px;
    flex: none;
    border-radius: 14px;
    box-shadow: inset 0 0 0 1px rgba(255, 255, 255, .15);
    color: #fff;
    font: 700 28px/58px "Liberation Serif", serif;
    text-align: center;
    position: relative;
}
.avatar::after {
    content: "";
    position: absolute;
    left: 10px;
    right: 10px;
    bottom: 13.5px;
    height: 3px;
    background: #e8eaee;
}
.who {
    flex: 1;
    padding: 1px 0 0 1px;
}
.who h3 {
    margin: 0;
    font-size: 24px;
    line-height: 36px;
    font-weight: 600;
    letter-spacing: -.25px;
}
.who span {
    display: block;
    font-size: 16.5px;
    line-height: 24px;
    font-weight: 500;
    letter-spacing: .15px;
    color: var(--tone);
}
.mood {
    font-size: 17.3px;
    line-height: 26px;
    font-weight: 600;
    color: #64748b;
}
.mood.cool {
    color: #b91c1c;
}
.metric {
    display: flex;
    justify-content: space-between;
    height: 35px;
    line-height: 34px;
    font-size: 18.5px;
    color: #64748b;
}
.metric b {
    color: #0f172a;
    font-weight: 600;
    letter-spacing: -.3px;
}
.track {
    height: 9px;
    margin-bottom: 10px;
    border-radius: 5px;
    box-shadow: inset 0 0 0 1px #d9dee5;
    background: #f8fafc;
}
.track i {
    display: block;
    height: 9px;
    border-radius: 5px;
}
.relationship {
    background: #15803d;
}
.reach {
    background: #2563eb;
}
.credibility {
    background: #64748b;
}
.profile {
    display: block;
    padding-top: 3px;
    font-size: 17.5px;
    line-height: 28px;
    font-weight: 500;
    letter-spacing: -.17px;
    color: #818cf8;
}

/* ticker */
.ticker {
    position: absolute;
    left: 0;
    right: 0;
    bottom: 0;
    height: 57px;
    display: flex;
    align-items: center;
    background: rgba(24, 34, 52, .96);
    color: #ccd2da;
    font-size: 18px;
}
.badge {
    width: 118px;
    height: 56px;
    flex: none;
    display: flex;
    align-items: center;
    justify-content: center;
    gap: 8px;
    border-radius: 12px;
    background: linear-gradient(135deg, #2563eb, #4f46e5);
    color: #fff;
    font-size: 15px;
    font-weight: 800;
    letter-spacing: 1px;
}
.badge .icon {
    width: 18px;
    height: 18px;
}
.feed {
    flex: 1;
    overflow: hidden;
    white-space: nowrap;
}
.line {
    margin-left: -4px;
}
```
FILE: outlets.js
```
const tones = {
    farLeft: ['#b91c1c', '#7f1d1d'],
    labour: ['#f59e0b', '#b45309'],
    hardRight: ['#1d4ed8', '#1e2a5e'],
    progressive: ['#ef4444', '#b91c1c'],
    conservative: ['#3b82f6', '#1e3a8a'],
    centrist: ['#64748b', '#334155'],
    tabloid: ['#ec4899', '#9d174d'],
    business: ['#22c55e', '#15803d'],
    tech: ['#a855f7', '#6b21a8']
};

// [initials, x, y, tone, wire]
const nodes = [
    ['MW', 827, 42, 'centrist', true],
    ['SW', 856, 87, 'centrist', true],
    ['SW', 830, 167, 'centrist', true],
    ['IG', 770, 201, 'centrist', true],
    ['DB', 801, 123, 'centrist'],
    ['TW', 890, 132, 'centrist'],
    ['OO', 912, 178, 'centrist'],
    ['SS', 854, 213, 'centrist'],
    ['RR', 821, 256, 'centrist'],
    ['IT', 840, 303, 'tech'],
    ['BU', 914, 324, 'tabloid'],
    ['PP', 950, 272, 'tabloid'],
    ['PT', 463, 186, 'progressive'],
    ['UV', 396, 215, 'labour'],
    ['PB', 524, 219, 'progressive'],
    ['VR', 129, 256, 'farLeft'],
    ['HP', 1189, 206, 'conservative'],
    ['ED', 1273, 140, 'business'],
    ['CS', 1273, 187, 'business'],
    ['CH', 1273, 235, 'business'],
    ['NS', 1506, 264, 'hardRight']
];

// [name, role, x, y, width, role offset, colour]
const parties = [
    ['Liberty', 'Government', 1316, 484, 185.5, 91.5, '#eab308'],
    ['BP', 'Opposition', 1552, 505, 146, 59.5, '#14b8a6']
];

const outlets = [
    ['VR', 'The Vanguard Review', 'Far Left', 'farLeft', 'Cool', 32, 40, 48],
    ['UV', 'Union Voice', 'Pro-Labour', 'labour', 'Cool', 30, 50, 58],
    ['NS', 'The National Standard', 'Hard Right', 'hardRight', 'Cool', 33, 44, 46],
    ['PT', 'The Progressive Tribune', 'Progressive', 'progressive', 'Cool', 35, 68, 62],
    ['HP', 'The Heritage Post', 'Conservative', 'conservative', 'Neutral', 40, 66, 60],
    ['DB', 'Desk Bytes', 'Centrist', 'centrist', 'Neutral', 50, 55, 70],
    ['BU', 'The Buzz', 'Tabloid', 'tabloid', 'Neutral', 45, 85, 32],
    ['RR', 'Ringside Report', 'Centrist', 'centrist', 'Neutral', 50, 48, 58]
];

let svg = '<defs>';
for (const [name, [from, to]] of Object.entries(tones)) {
    svg += `<linearGradient id="t-${name}" x2="1" y2="1"><stop stop-color="${from}"/><stop offset="1" stop-color="${to}"/></linearGradient>`;
}
svg += '</defs>';
nodes.forEach(([initials, x, y, tone, wire]) => {
    const width = initials === 'IT' || initials === 'IG' ? 19 : 24;
    svg += `<g class="node${wire ? ' wire' : ''}" transform="translate(${x} ${y})">
        <rect x="-17.5" y="-17.5" width="35" height="35" rx="9" fill="url(#t-${tone})"/>
        <text y="6.5" textLength="${width}" lengthAdjust="spacingAndGlyphs">${initials}</text>
        <path d="M-12 9.5H12" stroke="#e8eaee" stroke-width="1.6"/>
        ${wire ? '<circle class="ring" cx="11" cy="-10" r="2.6"/>' : ''}
    </g>`;
});
parties.forEach(([name, role, x, y, width, offset, colour]) => {
    svg += `<g class="party" transform="translate(${x} ${y})">
        <rect width="${width}" height="31.5" rx="15.7" fill="#050a1c" stroke="${colour}" stroke-width="2"/>
        <path d="M17.5 7 26 15.7 17.5 24.5 9 15.7z" fill="${colour}"/>
        <text x="31.5" y="22">${name}</text>
        <text class="role" x="${offset}" y="21.5">${role}</text>
    </g>`;
});
document.getElementById('map').insertAdjacentHTML('beforeend', svg);

const metric = (label, value) => `
    <div class="metric"><span>${label}</span><b>${value}%</b></div>
    <div class="track"><i class="${label.toLowerCase()}" style="width: ${value}%"></i></div>`;

document.getElementById('outlets').innerHTML = outlets.map(
    ([initials, name, slant, tone, mood, relationship, reach, credibility]) => `
    <div class="outlet" style="--tone: ${tones[tone][0]}">
        <div class="outlet-head">
            <div class="avatar" style="background: linear-gradient(135deg, ${tones[tone]})">${initials}</div>
            <div class="who"><h3>${name}</h3><span>${slant}</span></div>
            <span class="mood ${mood.toLowerCase()}">${mood}</span>
        </div>
        ${metric('Relationship', relationship)}
        ${metric('Reach', reach)}
        ${metric('Credibility', credibility)}
        <a class="profile">View profile &amp; build relationship →</a>
    </div>`).join('');
```
